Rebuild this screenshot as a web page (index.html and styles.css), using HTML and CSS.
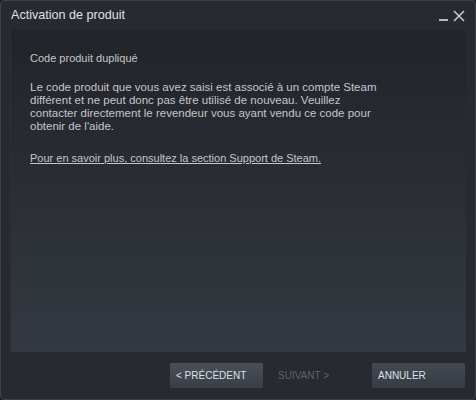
FILE: index.html
```html
<!DOCTYPE html>
<html lang="fr">
    <head>
        <meta charset="UTF-8">
        <title>Activation de produit</title>
        <link rel="stylesheet" href="styles.css">
    </head>
    <body>
        <div class="window">
            <div class="titlebar">
                <span class="title">Activation de produit</span>
                <div class="controls">
                    <span class="min"></span>
                    <svg class="close" width="12" height="12" viewBox="0 0 12 12">
                        <path d="M1 1 L11 11 M11 1 L1 11" stroke="#c8cacd" stroke-width="1.6" fill="none"/>
                    </svg>
                </div>
            </div>
            <div class="panel">
                <p class="heading">Code produit dupliqué</p>
                <p class="msg">Le code produit que vous avez saisi est associé à un compte Steam différent et ne peut donc pas être utilisé de nouveau. Veuillez contacter directement le revendeur vous ayant vendu ce code pour obtenir de l'aide.</p>
                <a class="support" href="#">Pour en savoir plus, consultez la section Support de Steam.</a>
            </div>
            <div class="footer">
                <button class="btn">&lt; PRÉCÉDENT</button>
                <button class="btn disabled">SUIVANT &gt;</button>
                <button class="btn cancel">ANNULER</button>
            </div>
        </div>
    </body>
</html>
```
FILE: styles.css
```css
html, body {
    margin: 0;
    padding: 0;
    background: #1b1d21;
}

.window {
    box-sizing: border-box;
    width: 476px;
    height: 400px;
    border: 1px solid #3c414a;
    border-radius: 4px;
    background: #272a30;
    font-family: "Liberation Sans", Arial, sans-serif;
    color: #c4c6c9;
    display: flex;
    flex-direction: column;
}

.titlebar {
    height: 29px;
    display: flex;
    align-items: center;
    justify-content: space-between;
    padding: 0 10px 0 10px;
}

.title {
    font-size: 12.6px;
    color: #dfe1e3;
    margin-top: -1px;
}

.controls {
    display: flex;
    align-items: center;
    gap: 5px;
}

.min {
    width: 9px;
    height: 2px;
    background: #b8babd;
    margin-top: 8px;
}

.close {
    display: block;
}

.panel {
    height: 322px;
    margin: 0 9px 0 9px;
    padding: 22px 20px 0 19px;
    box-sizing: border-box;
    background: linear-gradient(to bottom, #212429, #343840);
    border-left: 1px solid #2c3036;
    font-size: 11px;
    line-height: 13px;
}

.panel p {
    margin: 0;
}

.heading {
    padding-bottom: 16px;
}

.msg {
    max-width: 352px;
    font-size: 11.5px;
    padding-bottom: 19px;
}

.support {
    color: #c4c6c9;
    text-decoration: underline;
}

.footer {
    flex: 1;
    display: flex;
    align-items: center;
    padding: 0 10px 0 169px;
}

.btn {
    width: 93px;
    height: 25px;
    border: 0;
    border-radius: 1px;
    padding: 0 0 0 6px;
    text-align: left;
    font-family: "Liberation Sans", Arial, sans-serif;
    font-size: 10px;
    color: #dfe1e3;
    background: linear-gradient(to bottom, #4a5059, #393e46);
    margin-top: -1px;
}

.disabled {
    background: none;
    color: #5e646c;
    padding-left: 15px;
}

.cancel {
    margin-left: auto;
    background: linear-gradient(to bottom, #434950, #373c44);
}
```
